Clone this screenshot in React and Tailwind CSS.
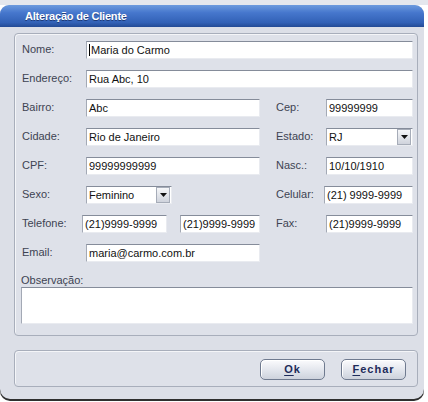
import React from 'react';

const Label = ({ children, w = 'w-[64px]' }) => (
    <div className={`${w} shrink-0 text-[11px] leading-[13px] text-[#3d4352] -mt-[2px]`}>{children}</div>
);

const Field = ({ value, w = 'flex-1', caret = false }) => (
    <div className={`${w} h-[18px] shrink-0 bg-white border-t border-l border-t-[#858c9a] border-l-[#a3a9b5] border-b border-r border-b-[#e9ebf0] border-r-[#e9ebf0] flex items-center pl-[2px] overflow-hidden whitespace-nowrap text-[11px] text-[#111]`}>
        {caret && <span className="w-px h-[12px] bg-black mr-px shrink-0" />}
        <span>{value}</span>
    </div>
);

const Select = ({ value, w }) => (
    <div className={`${w} h-[18px] shrink-0 bg-white border-t border-l border-t-[#858c9a] border-l-[#a3a9b5] border-b border-r border-b-[#e9ebf0] border-r-[#e9ebf0] flex items-center text-[11px] text-[#111]`}>
        <span className="flex-1 pl-[2px] pt-px">{value}</span>
        <div className="w-[14px] h-[16px] mr-px bg-[linear-gradient(to_bottom,#f6f7f9,#cfd3dc)] border border-[#a6acb8] flex items-center justify-center">
            <svg width="7" height="4" viewBox="0 0 7 4"><path d="M0 0h7L3.5 4z" fill="#111" /></svg>
        </div>
    </div>
);

const Button = ({ first, rest }) => (
    <button className="w-[65px] h-[21px] rounded-[5px] border border-[#6f7a8f] bg-[linear-gradient(to_bottom,#fbfbfd,#e4e7ee_50%,#cdd2dc)] shadow-[inset_1px_1px_0_#ffffff] text-[11px] font-bold tracking-[1px] text-[#1e2b5a] flex items-center justify-center">
        <span className="underline underline-offset-2">{first}</span>{rest}
    </button>
);

const App = () => {
    return (
        <div className="w-[428px] h-[402px] bg-white font-['Liberation_Sans',Arial,sans-serif] overflow-hidden">
            <div className="h-[5px] bg-[#e4e7ed]" />
            <div className="w-[424px] h-[394px] bg-[#dcdfe7] rounded-t-[9px] rounded-b-[10px] shadow-[0_2px_0_#2f2f2f] flex flex-col">
                <div className="h-[22px] rounded-t-[9px] bg-[linear-gradient(to_bottom,#6c9ade,#4677cd_35%,#3261b6_80%,#234a95)] flex items-center pl-[25px]">
                    <span className="text-white text-[11px] font-bold tracking-[-0.2px] [text-shadow:0_1px_0_#1c3a78]">Alteração de Cliente</span>
                </div>

                <div className="ml-[14px] mt-[6px] w-[404px] h-[303px] rounded-[4px] border border-[#a8aebb] bg-[#dee1e9] shadow-[inset_1px_1px_0_#f4f5f8] pt-[7px] pl-[7px] pr-[4px] flex flex-col">
                    <div className="flex flex-col gap-[11px]">
                        <div className="flex items-center">
                            <Label>Nome:</Label>
                            <Field value="Maria do Carmo" caret />
                        </div>
                        <div className="flex items-center">
                            <Label>Endereço:</Label>
                            <Field value="Rua Abc, 10" />
                        </div>
                        <div className="flex items-center">
                            <Label>Bairro:</Label>
                            <Field value="Abc" w="w-[174px]" />
                            <div className="w-[16px]" />
                            <Label w="w-[50px]">Cep:</Label>
                            <Field value="99999999" w="w-[87px]" />
                        </div>
                        <div className="flex items-center">
                            <Label>Cidade:</Label>
                            <Field value="Rio de Janeiro" w="w-[174px]" />
                            <div className="w-[16px]" />
                            <Label w="w-[50px]">Estado:</Label>
                            <Select value="RJ" w="w-[87px]" />
                        </div>
                        <div className="flex items-center">
                            <Label>CPF:</Label>
                            <Field value="99999999999" w="w-[174px]" />
                            <div className="w-[16px]" />
                            <Label w="w-[50px]">Nasc.:</Label>
                            <Field value="10/10/1910" w="w-[87px]" />
                        </div>
                        <div className="flex items-center">
                            <Label>Sexo:</Label>
                            <Select value="Feminino" w="w-[86px]" />
                            <div className="w-[104px]" />
                            <Label w="w-[48px]">Celular:</Label>
                            <Field value="(21) 9999-9999" w="w-[89px]" />
                        </div>
                        <div className="flex items-center">
                            <Label w="w-[60px]">Telefone:</Label>
                            <Field value="(21)9999-9999" w="w-[85px]" />
                            <div className="w-[13px]" />
                            <Field value="(21)9999-9999" w="w-[80px]" />
                            <div className="w-[16px]" />
                            <Label w="w-[50px]">Fax:</Label>
                            <Field value="(21)9999-9999" w="w-[87px]" />
                        </div>
                        <div className="flex items-center">
                            <Label>Email:</Label>
                            <Field value="maria@carmo.com.br" w="w-[174px]" />
                        </div>
                    </div>
                    <div className="mt-[12px] h-[13px] text-[11px] leading-[13px] text-[#3d4352] -ml-px">Observação:</div>
                    <div className="-ml-px h-[37px] bg-white border-t border-l border-t-[#858c9a] border-l-[#a3a9b5] border-b border-r border-b-[#e9ebf0] border-r-[#e9ebf0]" />
                </div>

                <div className="ml-[14px] mt-[14px] w-[404px] h-[37px] rounded-[4px] border border-[#a8aebb] bg-[#dee1e9] shadow-[inset_1px_1px_0_#f4f5f8] flex items-center justify-end gap-[16px] pr-[11px] pt-[2px]">
                    <Button first="O" rest="k" />
                    <Button first="F" rest="echar" />
                </div>
            </div>
        </div>
    );
};

export default App;
